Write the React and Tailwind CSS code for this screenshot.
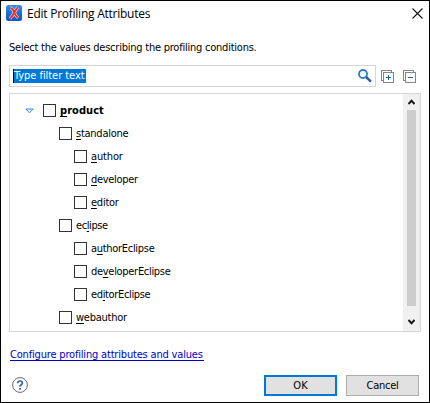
const ROWS = [
  { before: '', key: 'p', after: 'roduct', level: 0, tracking: 'tracking-[0.05px] font-bold' },
  { before: '', key: 's', after: 'tandalone', level: 1, tracking: 'tracking-[-0.25px]' },
  { before: '', key: 'a', after: 'uthor', level: 2, tracking: 'tracking-[-0.15px]' },
  { before: '', key: 'd', after: 'eveloper', level: 2, tracking: 'tracking-[-0.3px]' },
  { before: '', key: 'e', after: 'ditor', level: 2, tracking: 'tracking-[-0.25px]' },
  { before: 'ec', key: 'l', after: 'ipse', level: 1, tracking: 'tracking-[-0.4px]' },
  { before: 'a', key: 'u', after: 'thorEclipse', level: 2, tracking: 'tracking-[-0.3px]' },
  { before: 'de', key: 'v', after: 'eloperEclipse', level: 2, tracking: 'tracking-[-0.3px]' },
  { before: 'ed', key: 'i', after: 'torEclipse', level: 2, tracking: 'tracking-[-0.35px]' },
  { before: '', key: 'w', after: 'ebauthor', level: 1, tracking: 'tracking-[-0.25px]' },
];

const INDENT = ['pl-[15px]', 'pl-[49px]', 'pl-[64px]'];

function AppLogo() {
  return (
    <svg width="16" height="16" viewBox="0 0 16 16">
      <defs>
        <linearGradient id="tile" x1="0" y1="0" x2="0" y2="1">
          <stop offset="0" stopColor="#2b8df2" />
          <stop offset="1" stopColor="#0a55c4" />
        </linearGradient>
      </defs>
      <rect width="16" height="16" rx="2.5" fill="url(#tile)" />
      <path d="M4.2 2.8Q6.5 3 8 7T12.2 13M12 2.3Q10.5 3.5 8.3 7.5T4 13.6" stroke="#f3d9e2" strokeWidth="3.2" fill="none" />
      <path d="M4.2 2.8Q6.5 3 8 7T12.2 13M12 2.3Q10.5 3.5 8.3 7.5T4 13.6" stroke="#ee2c1c" strokeWidth="1.8" fill="none" />
    </svg>
  );
}

function SearchIcon() {
  return (
    <svg width="14" height="14" viewBox="0 0 14 14" fill="none">
      <circle cx="5" cy="5" r="4" stroke="#2d7ac6" strokeWidth="1.8" />
      <path d="M8 8l5 4.6" stroke="#265c9e" strokeWidth="2.4" />
    </svg>
  );
}

function StackIcon({ plus }) {
  return (
    <svg width="13" height="13" viewBox="0 0 13 13" fill="none" shapeRendering="crispEdges">
      <path d="M10.5 2V.5H.5v10H2" stroke="#858585" />
      <rect x="2.5" y="2.5" width="10" height="10" stroke="#858585" />
      <path d={plus ? 'M5 7.5h5M7.5 5v5' : 'M5 7.5h5'} stroke="#1767a8" />
    </svg>
  );
}

function Chevron({ down }) {
  return (
    <svg width="7" height="6" viewBox="0 0 7 6" fill="none">
      <path d={down ? 'M.4 1L3.5 4.2 6.6 1' : 'M.4 5L3.5 1.8 6.6 5'} stroke="#1c1c1c" strokeWidth="2.1" />
    </svg>
  );
}

function Row({ row }) {
  return (
    <div className={`flex h-[23px] shrink-0 items-center ${INDENT[row.level]}`}>
      {row.level === 0 && (
        <svg className="mr-[9px]" width="9" height="6" viewBox="0 0 9 6">
          <path d="M.8 1h7.4L4.5 4.8z" fill="#e8f4ff" stroke="#3b8ad8" />
        </svg>
      )}
      <span className="size-[13px] shrink-0 border border-[#333] bg-white" />
      <span className={`ml-1 whitespace-nowrap ${row.tracking}`}>
        {row.before}
        <span className="underline decoration-1 underline-offset-2 [text-decoration-skip-ink:none]">{row.key}</span>
        {row.after}
      </span>
    </div>
  );
}

export default function App() {
  return (
    <div className="flex h-[403px] w-[430px] flex-col border border-black bg-white font-['DejaVu_Sans_Condensed','DejaVu_Sans',sans-serif] text-[11px] leading-[14px] text-black">
      <header className="flex h-6 shrink-0 items-center pr-[6px] pl-[5px]">
        <AppLogo />
        <h1 className="ml-[5px] whitespace-nowrap pt-px font-['Open_Sans',sans-serif] text-[12px] tracking-[-0.25px]">Edit Profiling Attributes</h1>
        <svg className="ml-auto" width="11" height="11" viewBox="0 0 11 11">
          <path d="M.5.5l10 10M10.5.5l-10 10" stroke="#111" strokeWidth="1.1" />
        </svg>
      </header>
      <p className="mt-4 ml-2 h-6 shrink-0 whitespace-nowrap tracking-[-0.23px]">Select the values describing the profiling conditions.</p>
      <div className="flex h-[22px] shrink-0 items-center pl-2">
        <div className="flex h-[22px] w-[367px] items-center justify-between border border-[#d5d5d5] pr-[3px] pl-[3px]">
          <span className="flex h-[14px] w-[73px] items-center whitespace-nowrap border-l border-black bg-[#0078d7] tracking-[-0.05px] text-white">Type filter text</span>
          <SearchIcon />
        </div>
        <div className="ml-[5px] flex gap-[9px]">
          <StackIcon plus />
          <StackIcon />
        </div>
      </div>
      <div className="mx-2 mt-[6px] flex h-[239px] w-[412px] shrink-0 border border-[#d5d5d5]">
        <div className="flex min-w-0 flex-1 flex-col pt-[5px]">
          {ROWS.map((row) => (
            <Row key={row.before + row.key + row.after} row={row} />
          ))}
        </div>
        <div className="flex w-[17px] flex-col items-center bg-[#f0f0f0] pt-[5px] pb-[6px]">
          <Chevron />
          <div className="mt-[5px] h-[196px] w-[9px] bg-[#cdcdcd]" />
          <div className="mt-auto flex"><Chevron down /></div>
        </div>
      </div>
      <a className="mt-[15px] ml-[9px] flex h-[14px] w-[194px] shrink-0 items-end whitespace-nowrap border-b border-[#0000c0] leading-[11px] tracking-[-0.18px] text-[#0000c0]">Configure profiling attributes and values</a>
      <footer className="mt-[14px] flex h-[21px] shrink-0 items-center pl-[11px]">
        <svg className="-mt-px" width="16" height="16" viewBox="0 0 16 16" fill="none">
          <circle cx="8" cy="8" r="7.4" stroke="#6c6c6c" />
          <path d="M5.6 6.2Q5.7 4 8 4t2.4 2Q10.4 7.1 9 7.9T8 9.8M8 11v1.7" stroke="#3c5fb0" strokeWidth="1.7" />
        </svg>
        <button className="ml-[236px] h-[21px] w-[73px] border-2 border-[#0078d7] bg-[#e1e1e1]">OK</button>
        <button className="ml-[9px] h-[21px] w-[73px] border border-[#adadad] bg-[#e1e1e1] tracking-[-0.25px]">Cancel</button>
      </footer>
    </div>
  );
}
